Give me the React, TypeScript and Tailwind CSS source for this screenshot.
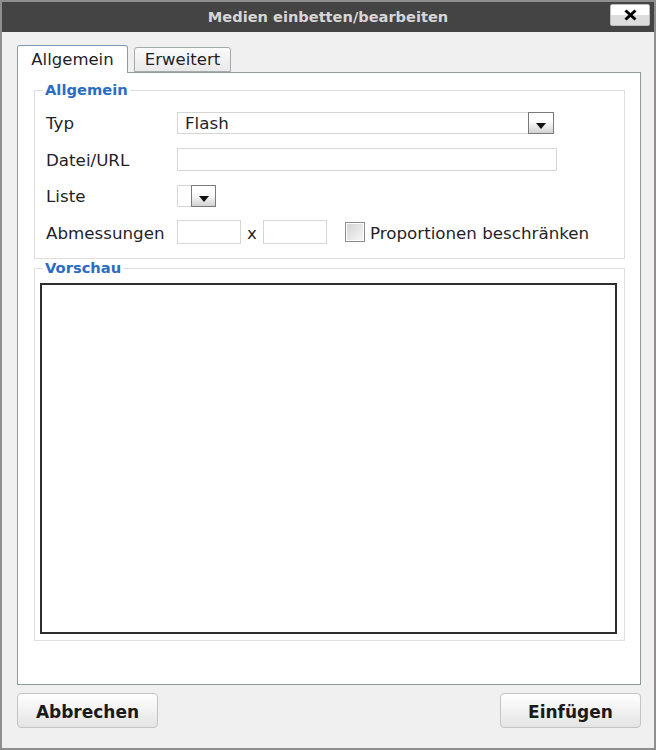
import React from "react"

function Arrow({ w }: { w: string }) {
  return (
    <div
      className={`${w} h-full flex items-end justify-center pb-[4px] border border-[#7a7a7a] bg-gradient-to-b from-white from-40% to-[#d2d2d2]`}
    >
      <svg width="10" height="6" viewBox="0 0 10 6">
        <path d="M0 0 H10 L5 6 Z" fill="#111" />
      </svg>
    </div>
  )
}

function Row({ label, h, children }: { label: string; h: string; children: React.ReactNode }) {
  return (
    <div className={`flex items-center ${h}`}>
      <span className="w-[131px] pt-[2px] text-[16.7px] leading-none text-[#1f1f29]">{label}</span>
      {children}
    </div>
  )
}

export default function App() {
  return (
    <div className="w-[656px] h-[750px] border-2 border-[#8e8e8e] bg-[#f0f0f0] flex flex-col font-['DejaVu_Sans',Verdana,sans-serif]">
      {/* Title bar */}
      <div className="relative h-[30px] bg-[#444444] flex items-center justify-center shrink-0">
        <span className="text-[14.6px] font-bold text-[#d6d6d6] leading-none">Medien einbetten/bearbeiten</span>
        <button className="absolute right-[4px] top-[2px] w-[40px] h-[22px] rounded-[2px] border border-[#bdbdbd] bg-gradient-to-b from-white from-50% to-[#dcdcdc] to-50% flex items-center justify-center">
          <svg width="13" height="12" viewBox="0 0 13 12">
            <path d="M1.5 1.5 L11.5 10.5 M11.5 1.5 L1.5 10.5" stroke="#000" strokeWidth="3" />
          </svg>
        </button>
      </div>

      <div className="flex-1 pl-[15px] pr-[13px] pt-[13px] flex flex-col">
        {/* Tabs */}
        <div className="relative z-10 -mb-px flex items-end gap-[6px] h-[28px]">
          <div className="w-[111px] h-[28px] pt-[2px] rounded-t-[3px] border border-b-0 border-[#919b9c] border-t-[#7f97b0] bg-white flex items-center justify-center text-[16.5px] leading-none text-[#1f1f29]">
            Allgemein
          </div>
          <div className="w-[97px] h-[25px] mb-px pt-[1px] rounded-t-[3px] border border-[#a3abad] bg-gradient-to-b from-[#fbfbfb] to-[#e9e9e9] flex items-center justify-center text-[16.5px] leading-none text-[#1f1f29]">
            Erweitert
          </div>
        </div>

        {/* Panel */}
        <div className="w-[624px] h-[613px] border border-[#919b9c] bg-white px-[16px] pt-[8px]">
          <fieldset className="w-[591px] border border-[#dedede]">
            <legend className="ml-[8px] px-[2px] text-[14.7px] font-bold leading-[18px] text-[#2c6cc3]">Allgemein</legend>
            <div className="pl-[11px] pt-[5px] pb-[8px]">
              <Row label="Typ" h="h-[37px]">
                <div className="flex w-[377px] h-[22px]">
                  <div className="flex-1 border border-r-0 border-[#d6d6d6] flex items-center pl-[7px] pt-[2px] text-[16.7px] leading-none text-[#1f1f29]">
                    Flash
                  </div>
                  <Arrow w="w-[26px]" />
                </div>
              </Row>
              <Row label="Datei/URL" h="h-[36px]">
                <div className="w-[380px] h-[23px] border border-[#d6d6d6]" />
              </Row>
              <Row label="Liste" h="h-[37px]">
                <div className="flex w-[39px] h-[22px]">
                  <div className="flex-1 border border-r-0 border-[#d6d6d6]" />
                  <Arrow w="w-[25px]" />
                </div>
              </Row>
              <Row label="Abmessungen" h="h-[36px]">
                <div className="w-[64px] h-[24px] border border-[#d6d6d6]" />
                <span className="w-[22px] pt-[2px] text-center text-[16.7px] leading-none text-[#1f1f29]">x</span>
                <div className="w-[64px] h-[24px] border border-[#d6d6d6]" />
                <div className="ml-[18px] w-[20px] h-[20px] border border-[#8a8a8a] p-px bg-white">
                  <div className="w-full h-full bg-gradient-to-br from-[#d4d4d4] to-[#f7f7f7]" />
                </div>
                <span className="ml-[5px] pt-[2px] text-[16.7px] leading-none text-[#1f1f29]">Proportionen beschränken</span>
              </Row>
            </div>
          </fieldset>

          <fieldset className="w-[591px] border border-[#dedede]">
            <legend className="ml-[8px] px-[2px] text-[14.7px] font-bold leading-[18px] text-[#2c6cc3]">Vorschau</legend>
            <div className="pl-[5px] pt-[6px] pb-[6px]">
              <div className="w-[577px] h-[351px] border-2 border-[#2e2e2e] bg-white" />
            </div>
          </fieldset>
        </div>

        {/* Buttons */}
        <div className="mt-[8px] flex justify-between">
          <button className="w-[141px] h-[35px] pt-[3px] rounded-[4px] border border-[#c4c4c4] bg-gradient-to-b from-white to-[#e4e4e4] text-[17px] font-bold text-[#1a1a1a] leading-none">
            Abbrechen
          </button>
          <button className="w-[141px] h-[35px] pt-[3px] rounded-[4px] border border-[#c4c4c4] bg-gradient-to-b from-white to-[#e4e4e4] text-[17px] font-bold text-[#1a1a1a] leading-none">
            Einfügen
          </button>
        </div>
      </div>
    </div>
  )
}
